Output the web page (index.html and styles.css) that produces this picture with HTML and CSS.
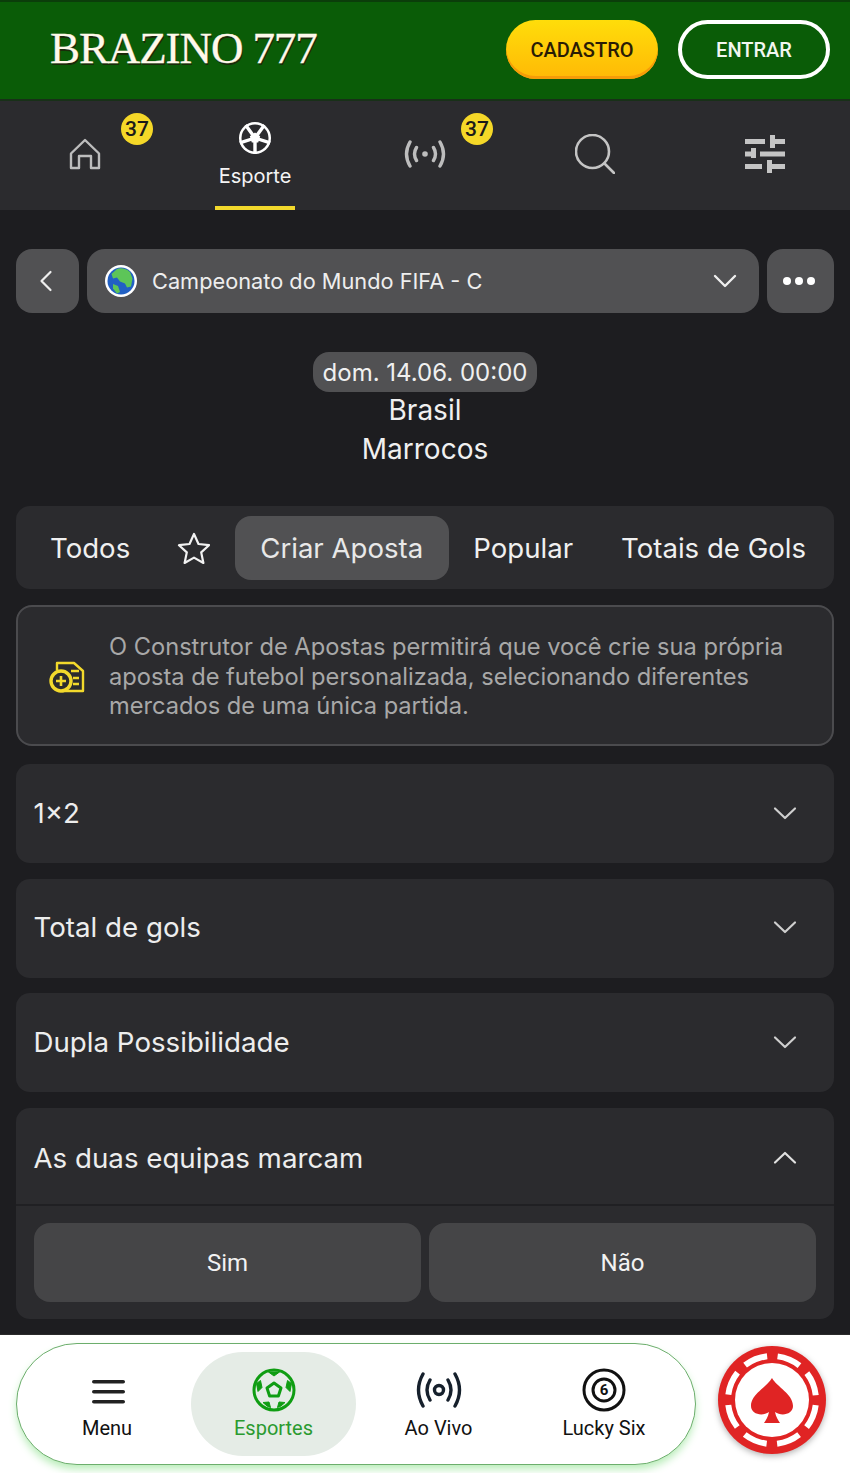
FILE: index.html
```html
<!DOCTYPE html>
<html lang="pt">
<head>
	<meta charset="utf-8" />
	<title>Brazino 777</title>
	<link rel="stylesheet" href="styles.css">
</head>
<body>
	<header class="topbar">
		<div class="logo">BRAZINO 777</div>
		<div class="auth">
			<button class="btn-signup">CADASTRO</button>
			<button class="btn-login">ENTRAR</button>
		</div>
	</header>

	<nav class="sportnav">
		<div class="sportnav-item">
			<svg width="32" height="32" viewBox="0 0 32 32" fill="none" stroke="#bdbdbd" stroke-width="2.4"><path d="M2 15.500 16 2l14 13.500V30H22V18H10v12H2z" stroke-linejoin="round"/></svg>
			<span class="badge">37</span>
		</div>
		<div class="sportnav-item active">
			<svg width="32" height="32" viewBox="0 0 32 32"><circle cx="16" cy="16" r="16" fill="#fff"/><circle cx="16" cy="16" r="13.500" fill="#2b2b2e"/><path d="M16 16 25.400 3.100M16 16 6.600 3.100M16 16l15.200 4.900M16 16 .8 20.900M16 16v16" stroke="#fff" stroke-width="3.400"/><path d="M16 10.500l5.200 3.800-2 6.100h-6.400l-2-6.100z" fill="#fff"/></svg>
			<span class="sportnav-label">Esporte</span>
		</div>
		<div class="sportnav-item">
			<svg width="42" height="30" viewBox="0 0 42 30" fill="none" stroke="#bdbdbd" stroke-width="3.400" stroke-linecap="round"><path d="M6 3Q-1 15 6 27M12.500 8.500Q8.500 15 12.500 21.500M36 3q7 12 0 24M29.500 8.500q4 6.500 0 13"/><circle cx="21" cy="15" r="2.800" fill="#bdbdbd" stroke="none"/></svg>
			<span class="badge">37</span>
		</div>
		<div class="sportnav-item">
			<svg width="40" height="40" viewBox="0 0 40 40" fill="none" stroke="#c4c4c4" stroke-width="2.600" stroke-linecap="round"><circle cx="17.500" cy="17.500" r="16.500"/><path d="M29.500 29.500 39 39"/></svg>
		</div>
		<div class="sportnav-item">
			<svg width="40" height="38" viewBox="0 0 40 38" fill="#c4c4c4"><path d="M0 4h20v5H0zM25 0h5v4h10v5H30v4h-5zM0 16.500h6V13h5v10H6v-1.500H0zM15 16.500h25v5H15zM0 29h17v5H0zM22 25h5v4h13v5H27v4h-5z"/></svg>
		</div>
	</nav>

	<main class="content">
		<div class="breadcrumb">
			<button class="crumb-btn">
				<svg width="14" height="22" viewBox="0 0 14 22" fill="none" stroke="#eee" stroke-width="2.200" stroke-linecap="round" stroke-linejoin="round"><path d="M11.500 2 2.500 11l9 9"/></svg>
			</button>
			<div class="league">
				<svg class="globe" width="32" height="32" viewBox="0 0 32 32"><circle cx="16" cy="16" r="16" fill="#fff"/><circle cx="16" cy="16" r="13.500" fill="#2160c4"/><path d="M12 4c3-1.500 9-1 13 3l2.500 6.500-1.500 8-4 1-2-4-5-2-3-4-4 1-1.500-4.500z" fill="#5dc558"/><path d="M8 19l5 2 2 6-3 1.500-4-5z" fill="#5dc558"/></svg>
				<span class="league-name">Campeonato do Mundo FIFA - C</span>
				<svg width="24" height="14" viewBox="0 0 24 14" fill="none" stroke="#eee" stroke-width="2.400" stroke-linecap="round" stroke-linejoin="round"><path d="M2 2l10 10L22 2"/></svg>
			</div>
			<button class="crumb-btn more">
				<svg width="34" height="10" viewBox="0 0 34 10" fill="#fff"><circle cx="5" cy="5" r="4"/><circle cx="17" cy="5" r="4"/><circle cx="29" cy="5" r="4"/></svg>
			</button>
		</div>

		<div class="match">
			<div class="match-date">dom. 14.06. 00:00</div>
			<div class="match-team">Brasil</div>
			<div class="match-team">Marrocos</div>
		</div>

		<div class="tabs">
			<span class="tab tab-all">Todos</span>
			<svg class="tab-star" width="34" height="32" viewBox="0 0 34 32" fill="none" stroke="#f2f2f2" stroke-width="2.200" stroke-linejoin="round"><path d="M17 2l4.500 10 10.500 1.200-7.800 7.200 2.200 10.600-9.400-5.400L7.600 31l2.200-10.600L2 13.200 12.500 12z"/></svg>
			<span class="tab active">Criar Aposta</span>
			<span class="tab tab-popular">Popular</span>
			<span class="tab tab-totals">Totais de Gols</span>
		</div>

		<div class="info">
			<svg width="36" height="32" viewBox="0 0 36 32" fill="none" stroke="#f2d92c" stroke-width="2.400" stroke-linejoin="round"><path d="M8 9V2h17l9 8v20H13"/><circle cx="12" cy="20" r="10" stroke-width="3.400"/><path d="M12 15v10M7 20h10M22 10h8M24 17h6M24 23h6" stroke-width="2.600"/></svg>
			<p class="info-text">O Construtor de Apostas permitirá que você crie sua própria aposta de futebol personalizada, selecionando diferentes mercados de uma única partida.</p>
		</div>

		<section class="market">
			<div class="market-head">
				<span>1×2</span>
				<svg width="24" height="14" viewBox="0 0 24 14" fill="none" stroke="#cfcfcf" stroke-width="2.200" stroke-linecap="round" stroke-linejoin="round"><path d="M2 2.500l10 9.500 10-9.500"/></svg>
			</div>
		</section>
		<section class="market">
			<div class="market-head">
				<span>Total de gols</span>
				<svg width="24" height="14" viewBox="0 0 24 14" fill="none" stroke="#cfcfcf" stroke-width="2.200" stroke-linecap="round" stroke-linejoin="round"><path d="M2 2.500l10 9.500 10-9.500"/></svg>
			</div>
		</section>
		<section class="market">
			<div class="market-head">
				<span>Dupla Possibilidade</span>
				<svg width="24" height="14" viewBox="0 0 24 14" fill="none" stroke="#cfcfcf" stroke-width="2.200" stroke-linecap="round" stroke-linejoin="round"><path d="M2 2.500l10 9.500 10-9.500"/></svg>
			</div>
		</section>
		<section class="market open">
			<div class="market-head">
				<span>As duas equipas marcam</span>
				<svg width="24" height="14" viewBox="0 0 24 14" fill="none" stroke="#e0e0e0" stroke-width="2.200" stroke-linecap="round" stroke-linejoin="round"><path d="M2 11.500 12 2l10 9.500"/></svg>
			</div>
			<div class="odds">
				<button class="odd">Sim</button>
				<button class="odd">Não</button>
			</div>
		</section>
	</main>

	<footer class="bottombar">
		<nav class="bottomnav">
			<div class="bottom-item item-menu">
				<svg width="34" height="26" viewBox="0 0 34 26" fill="#222"><rect y="1" width="33" height="3.600" rx="1.800"/><rect y="11" width="33" height="3.600" rx="1.800"/><rect y="21" width="33" height="3.600" rx="1.800"/></svg>
				<span>Menu</span>
			</div>
			<div class="bottom-item item-sport">
				<svg width="44" height="44" viewBox="0 0 44 44" fill="none" stroke="#0f9d12" stroke-width="3" stroke-linejoin="round"><circle cx="22" cy="22" r="20"/><path d="M22 15l7 5-2.600 8h-8.800L15 20z"/><path d="M16.500 4h11L22 8zM4.500 15.500l4-3 1.500 7-4 4zM39.500 15.500l-4-3-1.500 7 4 4zM11 34.500l6-.5 1.500 5.500-3.500-1.500zM33 34.500l-6-.5-1.500 5.500 3.500-1.500z" fill="#0f9d12" stroke-width="1"/></svg>
				<span>Esportes</span>
			</div>
			<div class="bottom-item item-live">
				<svg width="46" height="38" viewBox="0 0 46 38" fill="none" stroke="#16202c" stroke-width="3.400" stroke-linecap="round"><path d="M7 3Q-2 19 7 35M14 9q-6 10 0 20M39 3q9 16 0 32M32 9q6 10 0 20"/><circle cx="23" cy="19" r="4.500"/></svg>
				<span>Ao Vivo</span>
			</div>
			<div class="bottom-item item-lucky">
				<svg width="44" height="44" viewBox="0 0 44 44" fill="none" stroke="#111"><circle cx="22" cy="22" r="20" stroke-width="3"/><circle cx="22" cy="22" r="11" stroke-width="3"/><text x="22" y="27" text-anchor="middle" class="lucky-num">6</text></svg>
				<span>Lucky Six</span>
			</div>
		</nav>
		<svg class="chip" width="110" height="110" viewBox="0 0 110 110">
			<circle cx="55" cy="55" r="54" fill="#e02424"/>
			<circle cx="55" cy="55" r="44" fill="none" stroke="#fff" stroke-width="6" stroke-dasharray="24 10.560" stroke-dashoffset="-5.280"/>
			<circle cx="55" cy="55" r="37" fill="#fff"/>
			<path d="M55 33C60 42 76 49 76 61c0 8-11 11-18 6 1 5 3 8 5 11H47c2-3 4-6 5-11-7 5-18 2-18-6 0-12 16-19 21-28z" fill="#e02424"/>
		</svg>
	</footer>
</body>
</html>
```

FILE: styles.css
```css
* {
	box-sizing: border-box;
}

html, body {
	margin: 0;
	padding: 0;
}

body {
	width: 850px;
	height: 1473px;
	overflow: hidden;
	display: flex;
	flex-direction: column;
	background-color: #1d1d20;
	font-family: Inter, "Liberation Sans", sans-serif;
	color: #f0f0f0;
}

button {
	font-family: Roboto, sans-serif;
	border: none;
}

/* header */
.topbar {
	height: 101px;
	flex: none;
	display: flex;
	align-items: center;
	justify-content: space-between;
	padding: 0 20px 2px 50px;
	background-color: #0a5c07;
	border-top: 2px solid #0b3d0a;
	border-bottom: 2px solid #183018;
}

.logo {
	margin-bottom: 4px;
	font-family: "Liberation Serif", serif;
	font-size: 45px;
	letter-spacing: -1.1px;
	color: #fff8ea;
	-webkit-text-stroke: 0.3px #fff8ea;
	text-shadow: 1px 2px 0 #1a2a0a;
	white-space: nowrap;
}

.auth {
	display: flex;
	gap: 20px;
}

.btn-signup, .btn-login {
	width: 152px;
	height: 59px;
	border-radius: 30px;
	font-size: 20px;
	font-weight: 500;
}

.btn-signup {
	color: #2a1c05;
	background: linear-gradient(#ffdd0a, #ffb906);
	box-shadow: inset 0 -3px 0 #f59c08;
}

.btn-login {
	color: #f2f7f0;
	background: transparent;
	border: 4px solid #fff;
}

/* sport nav */
.sportnav {
	height: 109px;
	flex: none;
	display: grid;
	grid-template-columns: repeat(5, 170px);
	background-color: #2b2b2e;
}

.sportnav-item {
	position: relative;
	display: flex;
	flex-direction: column;
	align-items: center;
	justify-content: center;
	padding-bottom: 3px;
}

.sportnav-item.active {
	padding-bottom: 2px;
	gap: 10px;
}

.sportnav-item.active::after {
	content: "";
	position: absolute;
	left: 45px;
	right: 45px;
	bottom: 0;
	height: 4px;
	background-color: #f2d92c;
}

.sportnav-label {
	font-size: 20px;
	line-height: 24px;
	color: #f4f4f4;
}

.badge {
	position: absolute;
	top: 12px;
	left: 121px;
	width: 32px;
	height: 32px;
	border-radius: 50%;
	background-color: #f5d828;
	color: #1a1a1a;
	font-size: 21px;
	font-weight: 500;
	line-height: 32px;
	text-align: center;
	font-family: Roboto, sans-serif;
}

/* main column */
.content {
	flex: 1;
	min-height: 0;
	overflow: hidden;
	padding: 39px 16px 0;
}

.breadcrumb {
	display: flex;
	gap: 8px;
	height: 64px;
}

.crumb-btn {
	width: 63px;
	flex: none;
	display: flex;
	align-items: center;
	justify-content: center;
	padding: 0 4px 0 0;
	border-radius: 16px;
	background-color: #515153;
}

.crumb-btn.more {
	width: 67px;
}

.league {
	flex: 1;
	display: flex;
	align-items: center;
	padding: 0 22px 0 18px;
	border-radius: 18px;
	background-color: #515153;
}

.league-name {
	flex: 1;
	margin-left: 15px;
	font-size: 21.75px;
	color: #eee;
}

.match {
	display: flex;
	flex-direction: column;
	align-items: center;
	margin-top: 39px;
}

.match-date {
	height: 40px;
	padding: 0 10px;
	border-radius: 16px;
	background-color: #515153;
	font-size: 24px;
	line-height: 41px;
}

.match-team {
	height: 39px;
	font-size: 28px;
	line-height: 36px;
}

.tabs {
	display: flex;
	align-items: center;
	height: 83px;
	margin-top: 36px;
	padding-left: 34px;
	border-radius: 14px;
	background-color: #2b2b2e;
	font-size: 27.6px;
	color: #f0f0f0;
	white-space: nowrap;
}

.tab-star {
	margin-left: 47px;
}

.tab.active {
	display: flex;
	align-items: center;
	height: 64px;
	margin-left: 24px;
	padding: 0 26px 0 25px;
	border-radius: 16px;
	background-color: #515153;
	color: #e8e8e8;
}

.tab-popular {
	margin-left: 24px;
}

.tab-totals {
	margin-left: 48px;
}

.info {
	display: flex;
	align-items: center;
	height: 141px;
	margin-top: 16px;
	padding: 2px 0 0 31px;
	border: 2px solid #4b4b4e;
	border-radius: 16px;
	background-color: #2b2b2e;
}

.info-text {
	width: 700px;
	margin: 0 0 0 24px;
	font-size: 23.65px;
	line-height: 29.5px;
	color: #a8a8a8;
}

.market {
	margin-top: 18px;
	border-radius: 14px;
	background-color: #2b2b2e;
}

.market + .market {
	margin-top: 15.7px;
}

.market-head {
	display: flex;
	align-items: center;
	justify-content: space-between;
	height: 99px;
	padding: 0 37px 2px 17.5px;
	font-size: 27.7px;
	color: #ededed;
}

.market.open .market-head {
	height: 98px;
	padding-bottom: 0;
	padding-top: 3px;
	border-bottom: 2px solid #202023;
}

.odds {
	display: grid;
	grid-template-columns: 1fr 1fr;
	gap: 8px;
	padding: 17px 18px;
}

.odd {
	height: 79px;
	border-radius: 16px;
	background-color: #454547;
	color: #f2f2f2;
	font-size: 24px;
}

/* bottom bar */
.bottombar {
	height: 139px;
	flex: none;
	display: flex;
	align-items: flex-start;
	padding: 8px 0 0 16px;
	background-color: #fff;
	border-top: 1px solid #2a2a2a;
}

.bottomnav {
	width: 680px;
	height: 122px;
	display: flex;
	align-items: center;
	padding-left: 10px;
	border: 1.500px solid #6cae6c;
	border-radius: 61px;
	background-color: #fff;
	box-shadow: 0 5px 8px -1px #b6ecb6;
	font-family: Roboto, sans-serif;
	font-size: 20px;
	color: #111;
}

.bottom-item {
	display: flex;
	flex-direction: column;
	align-items: center;
	justify-content: flex-end;
	height: 104px;
	padding-bottom: 16px;
}

.bottom-item svg {
	margin-bottom: 4px;
}

.item-menu {
	width: 160px;
	margin-right: 4px;
}

.item-menu svg {
	margin-bottom: 11px;
	margin-left: 3px;
}

.item-sport {
	width: 165px;
	border-radius: 52px;
	background-color: #e5ece6;
	color: #2a9a2f;
}

.item-live {
	width: 165px;
}

.item-live svg {
	margin-bottom: 7px;
}

.item-lucky {
	width: 166px;
}

.lucky-num {
	font-family: Roboto, sans-serif;
	font-size: 15px;
	font-weight: 700;
	fill: #111;
	stroke: none;
}

.chip {
	flex: none;
	margin: 2px 0 0 21px;
	filter: drop-shadow(0 2px 3px rgba(0, 0, 0, 0.3));
}
```
